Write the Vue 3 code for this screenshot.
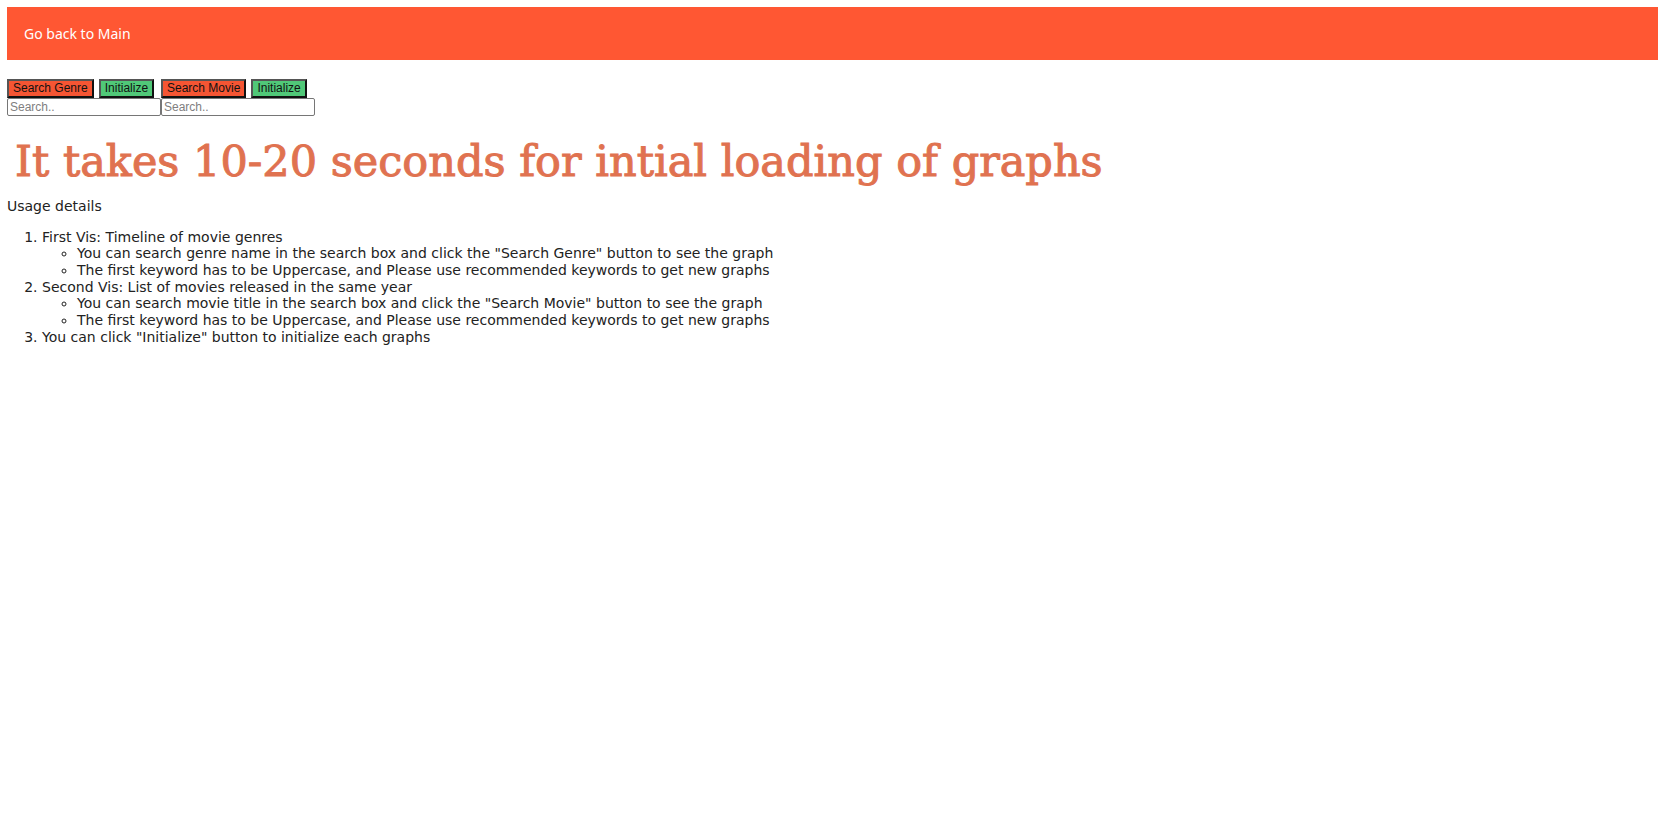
<script setup>
import { ref } from 'vue'

const genre = ref('')
const movie = ref('')
const sections = [
  {
    title: 'First Vis: Timeline of movie genres',
    notes: [
      'You can search genre name in the search box and click the "Search Genre" button to see the graph',
      'The first keyword has to be Uppercase, and Please use recommended keywords to get new graphs',
    ],
  },
  {
    title: 'Second Vis: List of movies released in the same year',
    notes: [
      'You can search movie title in the search box and click the "Search Movie" button to see the graph',
      'The first keyword has to be Uppercase, and Please use recommended keywords to get new graphs',
    ],
  },
  { title: 'You can click "Initialize" button to initialize each graphs', notes: [] },
]
</script>

<template>
  <div class="page">
    <nav class="navbar">
      <a href="#main">Go back to Main</a>
    </nav>
    <div class="searches">
      <form class="search" @submit.prevent>
        <div class="buttons">
          <button type="submit" class="find">Search Genre</button>
          <button type="button" class="reset" @click="genre = ''">Initialize</button>
        </div>
        <input v-model="genre" type="text" placeholder="Search.." aria-label="Search genre" />
      </form>
      <form class="search" @submit.prevent>
        <div class="buttons">
          <button type="submit" class="find">Search Movie</button>
          <button type="button" class="reset" @click="movie = ''">Initialize</button>
        </div>
        <input v-model="movie" type="text" placeholder="Search.." aria-label="Search movie" />
      </form>
    </div>
    <h1>It takes 10-20 seconds for intial loading of graphs</h1>
    <p>Usage details</p>
    <ol>
      <li v-for="section in sections" :key="section.title">
        {{ section.title }}
        <ul v-if="section.notes.length">
          <li v-for="note in section.notes" :key="note">{{ note }}</li>
        </ul>
      </li>
    </ol>
  </div>
</template>

<style>
body {
  margin: 0;
  background: #fff;
}
</style>

<style scoped>
.page {
  padding: 7px 6px 7px 7px;
  color: #222;
  font: 14px/17px Verdana, "DejaVu Sans", sans-serif;
}
.navbar {
  display: flex;
  background: #ff5733;
}
.navbar a {
  padding: 17px;
  color: #fff;
  font: 14px/19px "Noto Sans", sans-serif;
  text-decoration: none;
}
.searches {
  display: flex;
  margin-top: 19px;
}
.search {
  display: flex;
  flex-direction: column;
  width: 154px;
}
.buttons {
  display: flex;
  gap: 5px;
}
button {
  box-sizing: border-box;
  height: 19px;
  margin: 0;
  padding: 0 4px;
  border: 2px solid;
  border-color: #555 #111 #111 #555;
  color: #111;
  font: 12px/15px "Liberation Sans", sans-serif;
  white-space: nowrap;
}
.find {
  background: #f55533;
}
.reset {
  background: #50c878;
}
input {
  box-sizing: border-box;
  width: 100%;
  height: 18px;
  margin: 0;
  padding: 0 2px;
  border: 1px solid #767676;
  border-radius: 2px;
  background: #fff;
  font: 12px/16px "Liberation Sans", sans-serif;
}
input::placeholder {
  color: #808080;
}
h1 {
  margin: 22px 8px 14px;
  color: #e07250;
  font: 43px/46px "DejaVu Serif", serif;
  -webkit-text-stroke: 1px #e07250;
}
p {
  margin: 0;
}
ol {
  margin: 14px 0 0;
  padding-left: 35px;
  line-height: 16px;
}
ul {
  margin: 0;
  padding-left: 35px;
  line-height: 17px;
}
</style>
